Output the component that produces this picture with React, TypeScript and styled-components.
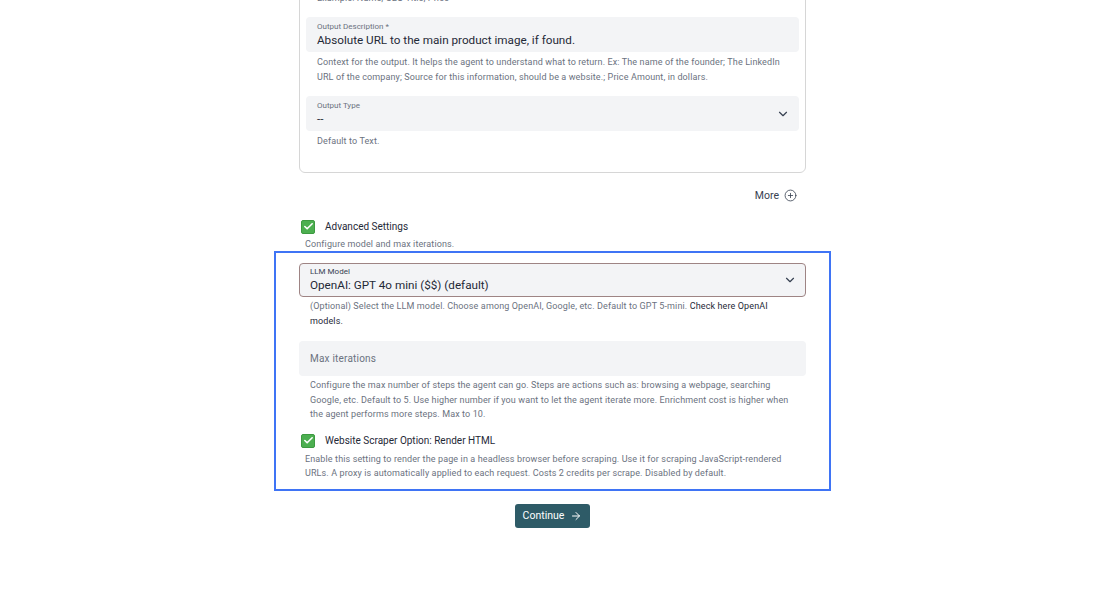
import styled, { createGlobalStyle } from 'styled-components';
import { ArrowRight, Check, ChevronDown, CirclePlus } from 'lucide-react';

const GlobalStyle = createGlobalStyle`
  html, body {
    margin: 0;
    padding: 0;
    background: #ffffff;
    overflow: hidden;
  }

  body {
    font-family: Roboto, "Liberation Sans", Arial, sans-serif;
    color: #1f2937;
  }
`;

const StyledPage = styled.div`
  width: 507px;
  margin: -24px auto 0;
  display: flex;
  flex-direction: column;
`;

const StyledCard = styled.div`
  border: 1px solid #d6d6d6;
  border-radius: 6px;
  padding: 14px 6px 23px;
  display: flex;
  flex-direction: column;
`;

const StyledHelper = styled.p<{ $indent?: number; $gap?: number; $lh?: number }>`
  margin: ${({ $gap }) => $gap ?? 2.5}px 0 0;
  padding: 0 ${({ $indent }) => $indent ?? 11}px;
  font-size: 9px;
  letter-spacing: 0.12px;
  line-height: ${({ $lh }) => $lh ?? 15}px;
  color: #6b7280;

  b {
    font-weight: 400;
    color: #1f2937;
  }
`;

const StyledField = styled.div<{ $gap?: number; $outlined?: boolean }>`
  margin-top: ${({ $gap }) => $gap ?? 11}px;
  height: ${({ $outlined }) => ($outlined ? 34 : 35)}px;
  box-sizing: border-box;
  background: #f3f4f6;
  border-radius: 4px;
  border: ${({ $outlined }) => ($outlined ? '1px solid #9e8484' : 'none')};
  padding: ${({ $outlined }) => ($outlined ? '0 8px 0 10px' : '0 9px 0 11px')};
  display: flex;
  align-items: center;
  justify-content: space-between;
`;

const StyledFieldText = styled.div`
  display: flex;
  flex-direction: column;
  min-width: 0;
`;

const StyledLabel = styled.span<{ $dark?: boolean }>`
  font-size: 8px;
  line-height: 11px;
  color: ${({ $dark }) => ($dark ? '#374151' : '#6b7280')};
`;

const StyledValue = styled.span`
  font-size: 11.7px;
  line-height: 17px;
  color: #1f2937;
`;

const StyledPlaceholder = styled.span`
  font-size: 10px;
  color: #6b7280;
  letter-spacing: 0.2px;
`;

const StyledChevron = styled(ChevronDown)`
  color: #374151;
  flex-shrink: 0;
`;

const StyledMoreRow = styled.div`
  margin-top: 15px;
  padding-right: 9px;
  display: flex;
  justify-content: flex-end;
  align-items: center;
  gap: 5px;
  height: 16px;
  font-size: 10.5px;
  color: #374151;
`;

const StyledCheckRow = styled.div<{ $gap?: number }>`
  margin-top: ${({ $gap }) => $gap ?? 16}px;
  padding-left: 2px;
  display: flex;
  align-items: center;
  gap: 10px;
  font-size: 10px;
  color: #1f2937;
`;

const StyledCheckbox = styled.span`
  width: 14px;
  height: 14px;
  box-sizing: border-box;
  border-radius: 2px;
  background: #4caf50;
  border: 1px solid #3d9a41;
  display: flex;
  align-items: center;
  justify-content: center;
  color: #ffffff;
`;

const StyledHighlight = styled.section`
  margin: 0 -25px;
  border: 2px solid #3f74f5;
  padding: 10px 23px 9px;
  display: flex;
  flex-direction: column;
`;

const StyledButton = styled.button`
  margin: 13px auto 0;
  width: 75px;
  height: 24px;
  border: none;
  border-radius: 3px;
  background: #2e5b67;
  color: #ffffff;
  font-family: inherit;
  font-size: 10.5px;
  display: flex;
  align-items: center;
  justify-content: center;
  gap: 6px;
`;

function Checkbox() {
    return (
        <StyledCheckbox>
            <Check size={11} strokeWidth={3.5}/>
        </StyledCheckbox>
    );
}

export default function App() {
    return (
        <>
            <GlobalStyle/>
            <StyledPage>
                <StyledCard>
                    <StyledHelper $gap={0}>Example: Name; CEO Title; Price</StyledHelper>
                    <StyledField>
                        <StyledFieldText>
                            <StyledLabel>Output Description *</StyledLabel>
                            <StyledValue>Absolute URL to the main product image, if found.</StyledValue>
                        </StyledFieldText>
                    </StyledField>
                    <StyledHelper>
                        Context for the output. It helps the agent to understand what to return. Ex: The name of the
                        founder; The LinkedIn URL of the company; Source for this information, should be a website.;
                        Price Amount, in dollars.
                    </StyledHelper>
                    <StyledField $gap={11.5}>
                        <StyledFieldText>
                            <StyledLabel>Output Type</StyledLabel>
                            <StyledValue>--</StyledValue>
                        </StyledFieldText>
                        <StyledChevron size={14} strokeWidth={2}/>
                    </StyledField>
                    <StyledHelper>Default to Text.</StyledHelper>
                </StyledCard>

                <StyledMoreRow>
                    More
                    <CirclePlus size={13} strokeWidth={1.5}/>
                </StyledMoreRow>

                <StyledCheckRow>
                    <Checkbox/>
                    Advanced Settings
                </StyledCheckRow>
                <StyledHelper $indent={6} $gap={3} $lh={14}>Configure model and max iterations.</StyledHelper>

                <StyledHighlight>
                    <StyledField $gap={0} $outlined>
                        <StyledFieldText>
                            <StyledLabel $dark>LLM Model</StyledLabel>
                            <StyledValue>OpenAI: GPT 4o mini ($$) (default)</StyledValue>
                        </StyledFieldText>
                        <StyledChevron size={14} strokeWidth={2}/>
                    </StyledField>
                    <StyledHelper>
                        (Optional) Select the LLM model. Choose among OpenAI, Google, etc. Default to GPT
                        5-mini. <b>Check here OpenAI models.</b>
                    </StyledHelper>
                    <StyledField $gap={11.5}>
                        <StyledPlaceholder>Max iterations</StyledPlaceholder>
                    </StyledField>
                    <StyledHelper $lh={14.5}>
                        Configure the max number of steps the agent can go. Steps are actions such as: browsing a
                        webpage, searching Google, etc. Default to 5. Use higher number if you want to let the agent
                        iterate more. Enrichment cost is higher when the agent performs more steps. Max to 10.
                    </StyledHelper>
                    <StyledCheckRow $gap={12}>
                        <Checkbox/>
                        Website Scraper Option: Render HTML
                    </StyledCheckRow>
                    <StyledHelper $indent={6} $gap={4} $lh={14}>
                        Enable this setting to render the page in a headless browser before scraping. Use it for
                        scraping JavaScript-rendered URLs. A proxy is automatically applied to each request. Costs 2
                        credits per scrape. Disabled by default.
                    </StyledHelper>
                </StyledHighlight>

                <StyledButton>
                    Continue
                    <ArrowRight size={12} strokeWidth={2}/>
                </StyledButton>
            </StyledPage>
        </>
    );
}
